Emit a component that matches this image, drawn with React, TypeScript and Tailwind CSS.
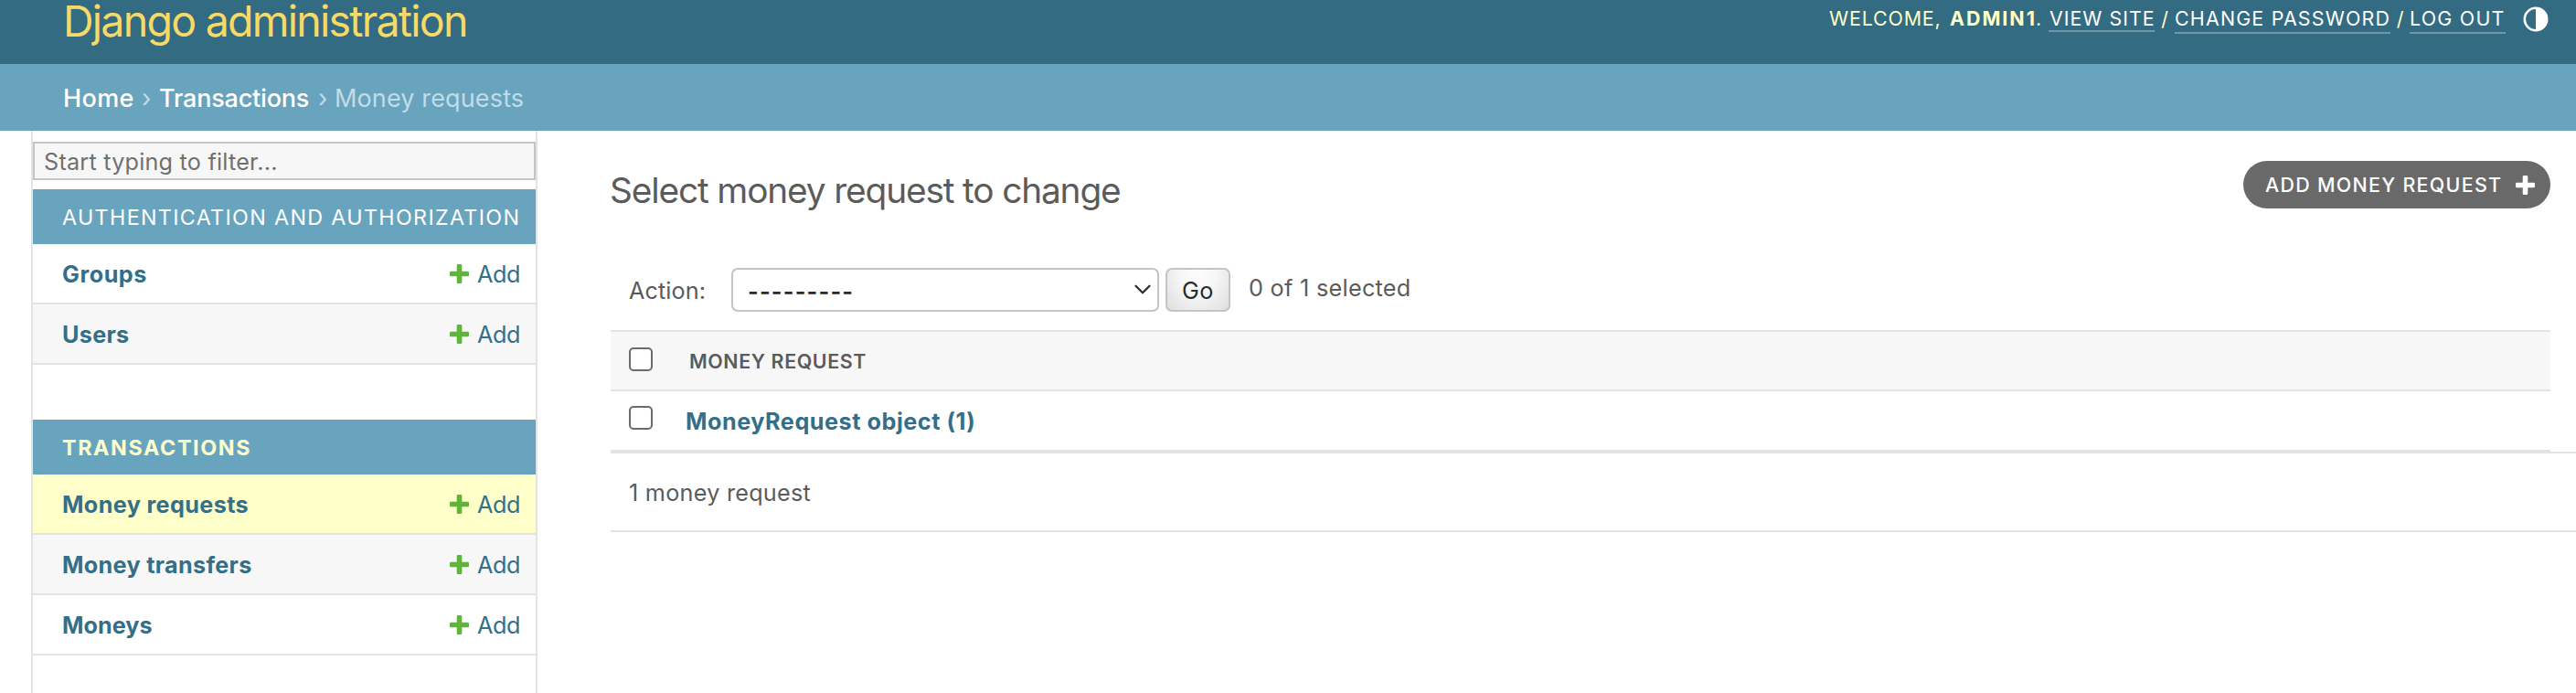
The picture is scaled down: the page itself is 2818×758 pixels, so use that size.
import React from "react";

type Model = { name: string; spacing: string; current?: boolean; alt?: boolean };

const authModels: Model[] = [
  { name: "Groups", spacing: "tracking-[0.55px]" },
  { name: "Users", spacing: "tracking-[0.3px]", alt: true },
];

const transactionModels: Model[] = [
  { name: "Money requests", spacing: "tracking-[0.38px]", current: true },
  { name: "Money transfers", spacing: "tracking-[0.33px]", alt: true },
  { name: "Moneys", spacing: "tracking-[0.05px]" },
];

function PlusIcon({ className }: { className: string }) {
  return (
    <svg viewBox="0 0 21 21" className={className} fill="currentColor" aria-hidden="true">
      <path d="M9 0h3q1.3 0 1.3 1.3v6.4h6.4Q21 7.7 21 9v3q0 1.3-1.3 1.3h-6.4v6.4q0 1.3-1.3 1.3H9q-1.3 0-1.3-1.3v-6.4H1.3Q0 13.3 0 12V9q0-1.3 1.3-1.3h6.4V1.3Q7.7 0 9 0Z" />
    </svg>
  );
}

function ModelRow({ model }: { model: Model }) {
  const bg = model.current ? "bg-[#ffffca]" : model.alt ? "bg-[#f7f7f7]" : "bg-white";
  return (
    <div className={`flex h-[66px] items-center justify-between border-b-2 border-[#e3e3e3] pt-px pr-[17px] pl-8 text-[#336f88] ${bg}`}>
      <a className={`text-[25.2px] leading-8 font-[650] ${model.spacing}`}>{model.name}</a>
      <a className="flex items-center text-[25.2px] leading-8 tracking-[-0.4px]">
        <PlusIcon className="mr-[9px] size-[21px] text-[#5fb53a]" />
        Add
      </a>
    </div>
  );
}

function Checkbox() {
  return <span role="checkbox" aria-checked="false" className="size-[26px] shrink-0 rounded-[5px] border-2 border-[#6b6b6b] bg-white" />;
}

export default function App() {
  return (
    <div className="flex h-[758px] w-[2818px] flex-col overflow-hidden bg-white font-['Inter','Liberation_Sans',sans-serif] font-[420] whitespace-nowrap text-[#5b5b5b]">
      <header className="flex h-[70px] shrink-0 items-start justify-between bg-[#336b82] pr-[30px] pl-[69px]">
        <h1 className="text-[46.5px] leading-[46px] font-[380] tracking-[-1.75px] text-[#f7d965]">Django administration</h1>
        <div className="flex pt-[5px] text-[21.4px] leading-[30px] text-[#ffffca]">
          <span className="w-[132px] tracking-[0.85px]">WELCOME,</span>
          <strong className="w-[94px] font-bold tracking-[2px]">ADMIN1</strong>
          <span className="w-[14px]">.</span>
          <a className="h-[30px] w-[116px] border-b-2 border-[#6f97a7] pl-px tracking-[1px] text-white">VIEW SITE</a>
          <span className="w-[22px] text-center">/</span>
          <a className="w-[236px] border-b-2 border-[#6f97a7] tracking-[1.2px] text-white">CHANGE PASSWORD</a>
          <span className="w-[21px] text-center">/</span>
          <a className="w-[105px] border-b-2 border-[#6f97a7] tracking-[1.25px] text-white">LOG OUT</a>
          <svg viewBox="0 0 28 28" className="mt-[2px] ml-[19px] size-7" aria-hidden="true">
            <circle cx="14" cy="14" r="12.2" fill="none" stroke="#fff" strokeWidth="2.6" />
            <path d="M14 1a13 13 0 0 1 0 26Z" fill="#fff" />
          </svg>
        </div>
      </header>

      <nav className="flex h-[73px] shrink-0 items-center bg-[#68a4be] pt-[2px] pl-[69px] text-[27px] leading-9 text-[#c2dbe7]">
        <a className="w-[86px] font-medium tracking-[0.4px] text-white">Home</a>
        <span className="w-[19px]">›</span>
        <a className="w-[174px] font-medium tracking-[-0.2px] text-white">Transactions</a>
        <span className="w-[18px]">›</span>
        <span className="tracking-[0.14px]">Money requests</span>
      </nav>

      <div className="flex min-h-0 flex-1">
        <aside className="ml-[34px] w-[554px] shrink-0 border-x-2 border-[#e3e3e3] pt-3">
          <div className="flex h-[42px] items-center border-2 border-[#c4c4c4] bg-[#f7f7f7] pt-px pl-[10px] text-[25.2px] leading-8 tracking-[0.22px] text-[#707070]">
            Start typing to filter...
          </div>
          <section className="mt-2.5">
            <h2 className="flex h-[60px] items-center bg-[#68a4be] pt-px pl-8 text-[23.3px] leading-8 font-[430] tracking-[1.33px] text-white">
              AUTHENTICATION AND AUTHORIZATION
            </h2>
            {authModels.map((m) => <ModelRow key={m.name} model={m} />)}
          </section>
          <section className="mt-[60px]">
            <h2 className="flex h-[60px] items-center bg-[#68a4be] pt-px pl-8 text-[23.3px] leading-8 font-bold tracking-[1.62px] text-[#ffffca]">
              TRANSACTIONS
            </h2>
            {transactionModels.map((m) => <ModelRow key={m.name} model={m} />)}
          </section>
        </aside>

        <main className="ml-20 min-w-0 flex-1 pt-[33px]">
          <div className="mr-7 flex h-[117px] items-start justify-between">
            <h2 className="mt-2 -ml-px text-[38.8px] leading-12 font-[380] tracking-[-1.14px]">Select money request to change</h2>
            <a className="flex h-[52px] w-[336px] items-center rounded-full bg-[#696969] pl-[24px] text-[21.4px] leading-7 font-medium tracking-[1.31px] text-white">
              ADD MONEY REQUEST
              <PlusIcon className="ml-[15px] size-[21px]" />
            </a>
          </div>

          <div className="flex h-[68px] text-[25.2px] leading-12">
            <label className="mt-px ml-5 w-[112px] tracking-[0.1px]">Action:</label>
            <div className="flex h-12 w-[467.5px] items-center justify-between rounded-[7px] border-2 border-[#c4c4c4] bg-white pr-[6.5px] pl-4 text-[#2b2b2b]">
              <span className="mt-[3px] font-semibold tracking-[1.2px]">---------</span>
              <svg viewBox="0 0 18 12" className="h-3 w-[18px]" fill="none" stroke="currentColor" strokeWidth="2.2" strokeLinecap="round" strokeLinejoin="round" aria-hidden="true">
                <path d="M1.5 1.7 9 9.3l7.5-7.6" />
              </svg>
            </div>
            <button className="ml-[7.5px] flex h-12 w-[71px] items-center justify-center rounded-[7px] border-2 border-[#c4c4c4] bg-[radial-gradient(ellipse_at_50%_0%,#fdfdfd_0%,#f6f6f6_45%,#dedede_100%)] pt-px tracking-[0.5px] text-[#2b2b2b]">
              Go
            </button>
            <span className="-mt-[2px] ml-[20px] tracking-[0.3px]">0 of 1 selected</span>
          </div>

          <div className="mr-7">
            <div className="flex h-[67px] items-center border-y-2 border-[#e3e3e3] bg-[#f7f7f7] pl-5">
              <span className="-mt-1 flex"><Checkbox /></span>
              <span className="ml-10 text-[21.4px] leading-7 font-semibold tracking-[0.6px]">MONEY REQUEST</span>
            </div>
            <div className="flex h-[66px] items-center border-b-2 border-[#e3e3e3] pl-5">
              <span className="-mt-[6px] flex"><Checkbox /></span>
              <a className="mt-px ml-9 text-[25.2px] leading-8 font-[650] tracking-[0.54px] text-[#336f88]">MoneyRequest object (1)</a>
            </div>
          </div>
          <p className="h-[88px] border-y-2 border-[#e3e3e3] pt-px pl-5 text-[25.2px] leading-[85px] tracking-[0.26px]">1 money request</p>
        </main>
      </div>
    </div>
  );
}
